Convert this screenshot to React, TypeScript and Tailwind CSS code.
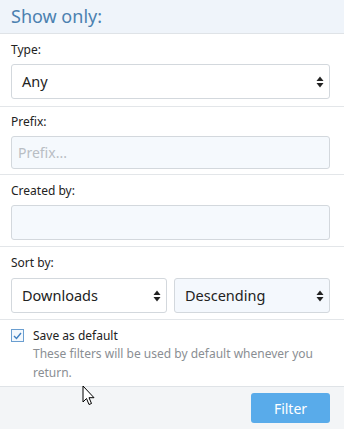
import React from "react";

const Arrows = () => (
  <svg width="8" height="12" viewBox="0 0 8 12" className="shrink-0">
    <path d="M4 0.5 L7.5 5 L0.5 5 Z" fill="#222" />
    <path d="M4 11.5 L7.5 7 L0.5 7 Z" fill="#222" />
  </svg>
);

const Select = ({ value, bg = "bg-white" }: { value: string; bg?: string }) => (
  <div
    className={`flex h-[35px] items-center justify-between rounded-[3px] border border-[#d3d8dd] ${bg} pl-[10px] pr-[5px] text-[14.5px] text-[#222]`}
  >
    <span>{value}</span>
    <Arrows />
  </div>
);

export default function App() {
  return (
    <div
      className="relative h-[429px] w-[344px] overflow-hidden bg-white text-[#222]"
      style={{ fontFamily: '"Noto Sans", sans-serif' }}
    >
      <div className="flex h-[34px] items-center border-b border-[#dfe3e7] bg-[#eff4fa] px-[11px] text-[18px] text-[#4b81b0]">
        Show only:
      </div>

      <div className="border-b border-[#e3e6e9] pb-[7px] pl-[11px] pr-[14px] pt-[8px]">
        <div className="mb-[6px] text-[12px] leading-[16px]">Type:</div>
        <Select value="Any" />
      </div>

      <div className="border-b border-[#e3e6e9] pb-[5px] pl-[11px] pr-[14px] pt-[7px]">
        <div className="mb-[6px] text-[12px] leading-[16px]">Prefix:</div>
        <div className="flex h-[33px] items-center rounded-[3px] border border-[#d3d8dd] bg-[#f5f9fd] px-[6px] text-[14px] text-[#b9bec4]">
          Prefix...
        </div>
      </div>

      <div className="border-b border-[#e3e6e9] pb-[6px] pl-[11px] pr-[14px] pt-[8px]">
        <div className="mb-[6px] text-[12px] leading-[16px]">Created by:</div>
        <div className="h-[35px] rounded-[3px] border border-[#d3d8dd] bg-[#f5f9fd]" />
      </div>

      <div className="border-b border-[#e3e6e9] pb-[6px] pl-[11px] pr-[14px] pt-[8px]">
        <div className="mb-[7px] text-[12px] leading-[16px]">Sort by:</div>
        <div className="grid grid-cols-2 gap-[7px]">
          <Select value="Downloads" />
          <Select value="Descending" bg="bg-[#f4f8fd]" />
        </div>
      </div>

      <div className="flex gap-[9px] pb-[4px] pl-[11px] pr-[14px] pt-[7px]">
        <div className="mt-[2px] flex h-[13px] w-[13px] shrink-0 items-center justify-center border border-[#6a9ed0] bg-[#f3f8fd]">
          <svg width="9" height="8" viewBox="0 0 9 8">
            <path d="M1 4 L3.5 6.5 L8 1" stroke="#3f7fc0" strokeWidth="1.4" fill="none" />
          </svg>
        </div>
        <div>
          <div className="text-[12px] leading-[17px]">Save as default</div>
          <div className="text-[12px] leading-[19px] text-[#8a8e93]">
            These filters will be used by default whenever you return.
          </div>
        </div>
      </div>

      <div className="flex h-[43px] items-center justify-end border-t border-[#dfe3e7] bg-[#f3f5f7] pr-[14px]">
        <div className="flex h-[30px] w-[79px] items-center justify-center rounded-[3px] bg-[#59abea] text-[14px] text-white">
          Filter
        </div>
      </div>

      <svg
        className="absolute left-[82px] top-[385px]"
        width="14"
        height="22"
        viewBox="0 0 14 22"
      >
        <path
          d="M1 1 L1 17 L4.5 13.5 L7 19.5 L9.5 18.5 L7 12.7 L12 12.7 Z"
          fill="#fff"
          stroke="#000"
          strokeWidth="1"
          strokeLinejoin="round"
        />
      </svg>
    </div>
  );
}
